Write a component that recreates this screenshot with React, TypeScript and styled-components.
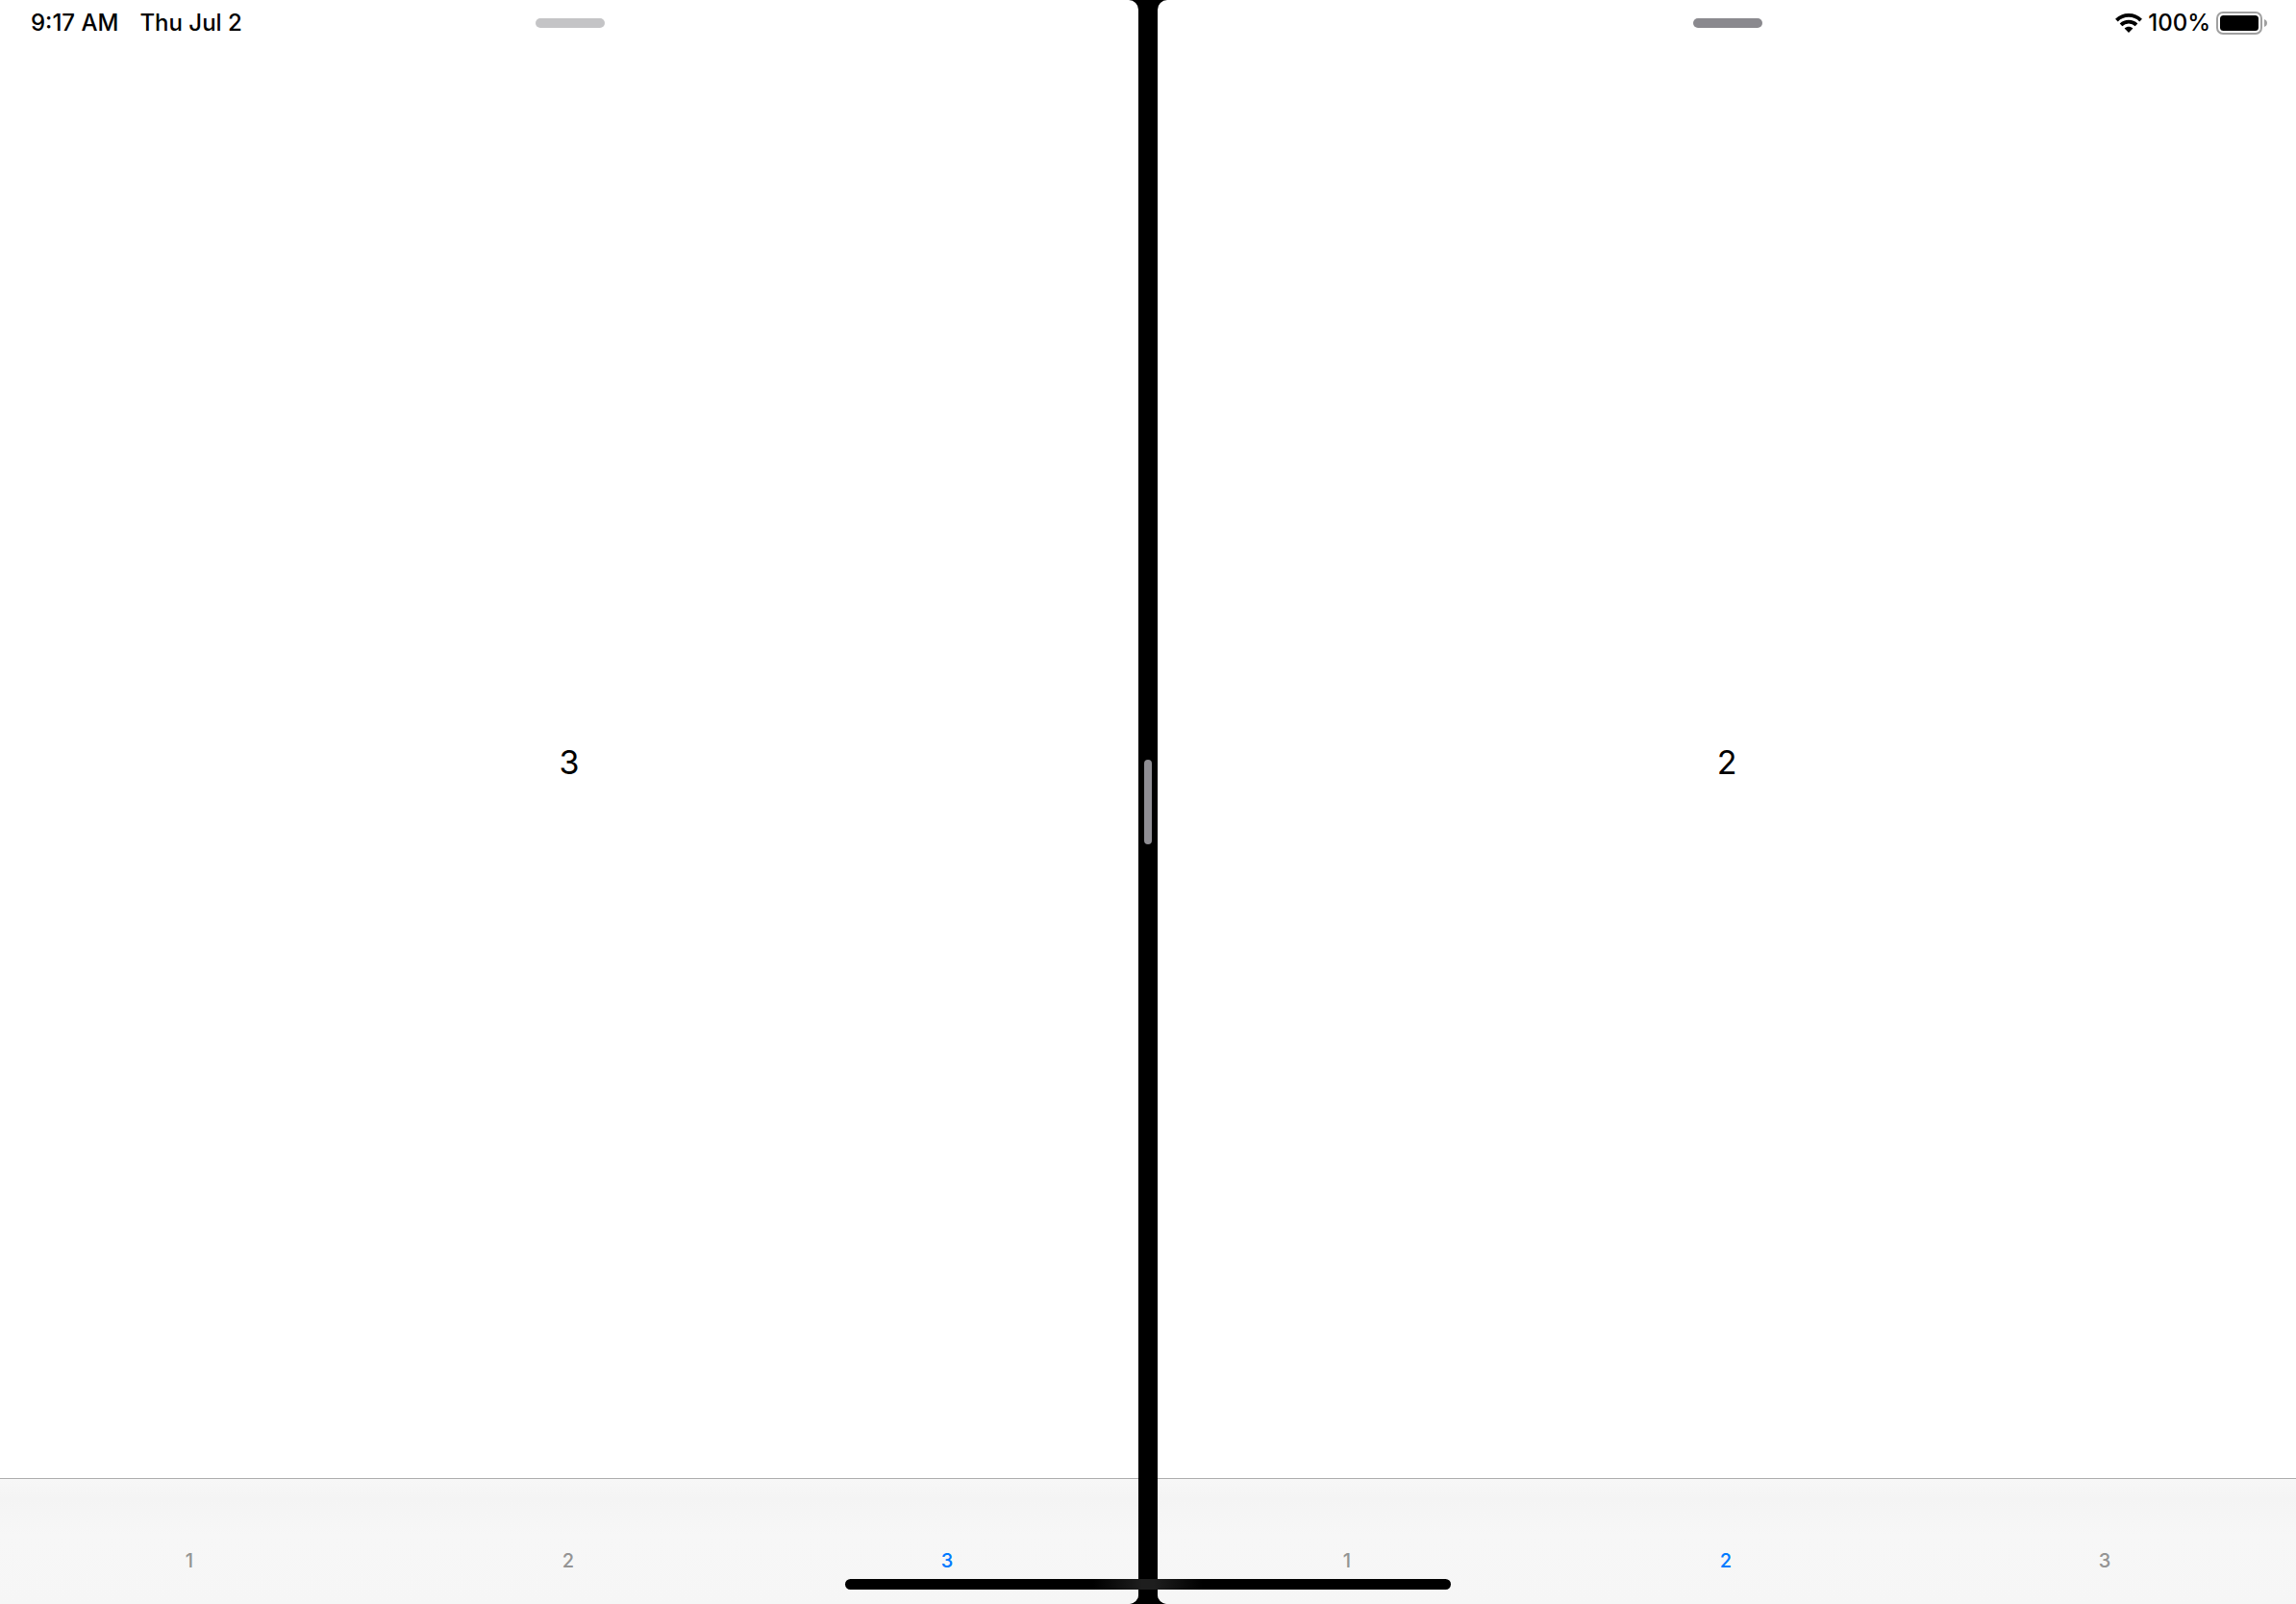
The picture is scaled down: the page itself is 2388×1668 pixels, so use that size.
import { useState } from 'react';
import styled, { createGlobalStyle } from 'styled-components';

const GlobalStyle = createGlobalStyle`
  *, *::before, *::after { box-sizing: border-box; }
  body {
    margin: 0;
    background: #000;
    color: #000;
    font-family: Inter, "Liberation Sans", sans-serif;
  }
`;

const Screen = styled.div`
  position: relative;
  display: flex;
  height: 100vh;
  overflow: hidden;
  background: #000;
`;

const Pane = styled.section<{ $side: 'left' | 'right' }>`
  flex: 1 1 0;
  min-width: 0;
  display: flex;
  flex-direction: column;
  overflow: hidden;
  background: #fff;
  border-radius: ${({ $side }) => ($side === 'left' ? '0 10px 10px 0' : '10px 0 0 10px')};
`;

const StatusBar = styled.header`
  display: grid;
  grid-template-columns: 1fr auto 1fr;
  align-items: center;
  height: 48px;
  padding: 0 30px 0 32px;
  font-size: 24px;
  line-height: 28px;
  font-weight: 500;
`;

const StatusStart = styled.div`
  display: flex;
  gap: 22px;
`;

const StatusEnd = styled.div`
  grid-column: 3;
  display: flex;
  align-items: center;
  justify-content: flex-end;
  gap: 6px;
`;

const Grabber = styled.button<{ $active: boolean }>`
  grid-column: 2;
  width: 72px;
  height: 10px;
  padding: 0;
  border: 0;
  border-radius: 5px;
  background: ${({ $active }) => ($active ? '#8a898e' : '#c4c4c6')};
`;

const Content = styled.main`
  flex: 1;
  display: flex;
  align-items: center;
  justify-content: center;
  font-size: 34px;
  line-height: 40px;
`;

const TabBar = styled.div`
  display: flex;
  height: 131px;
  padding-right: 2px;
  border-top: 1px solid #adadad;
  background: linear-gradient(#f7f7f7, #f4f4f4 16%, #f7f7f7 45%, #f6f6f6);
`;

const Tab = styled.button`
  flex: 1 1 0;
  display: flex;
  align-items: flex-end;
  justify-content: center;
  padding: 0 0 33px;
  border: 0;
  background: transparent;
  color: #949494;
  font: 500 20px/24px Inter, "Liberation Sans", sans-serif;

  &[aria-selected='true'] {
    color: #007aff;
  }
`;

const Divider = styled.div`
  flex: none;
  display: flex;
  align-items: center;
  justify-content: center;
  width: 20px;
`;

const DividerHandle = styled.span`
  width: 8px;
  height: 88px;
  border-radius: 4px;
  background: #8e8d93;
`;

const HomeIndicator = styled.div`
  position: absolute;
  left: 50%;
  bottom: 15px;
  width: 630px;
  height: 11px;
  transform: translateX(-50%);
  border-radius: 6px;
  background: linear-gradient(90deg, #000 41%, #1e1e1e 49%, #1e1e1e 51%, #000 59%);
  pointer-events: none;
`;

const WifiIcon = () => (
  <svg width="28" height="20" viewBox="0 0 28 20" role="img" aria-label="Wi-Fi">
    <g fill="none" stroke="#000" strokeWidth="3.8">
      <path d="M1.4 7.1C8.3 .2 19.7 .2 26.6 7.1" />
      <path d="M6 11.8c4.4-4.3 11.6-4.3 16 0" />
    </g>
    <path d="M14 20l-4.4-4.5c2.5-2.3 6.3-2.3 8.8 0z" />
  </svg>
);

const BatteryIcon = () => (
  <svg width="53" height="24" viewBox="0 0 53 24" role="img" aria-label="Battery full">
    <rect x="1" y="1" width="46" height="22" rx="6" fill="none" stroke="#a0a0a0" strokeWidth="2" />
    <rect x="4" y="4" width="40" height="16" rx="3.5" />
    <path d="M50 8c1.8.7 3 2.2 3 4s-1.2 3.300-3 4z" fill="#a0a0a0" />
  </svg>
);

const TABS = ['1', '2', '3'];

interface AppPaneProps {
  side: 'left' | 'right';
  initialTab: string;
}

const AppPane = ({ side, initialTab }: AppPaneProps) => {
  const [selected, setSelected] = useState(initialTab);

  return (
    <Pane $side={side}>
      <StatusBar>
        {side === 'left' && (
          <StatusStart>
            <time>9:17 AM</time>
            <time>Thu Jul 2</time>
          </StatusStart>
        )}
        <Grabber type="button" $active={side === 'right'} aria-label="Window options" />
        {side === 'right' && (
          <StatusEnd>
            <WifiIcon />
            <span>100%</span>
            <BatteryIcon />
          </StatusEnd>
        )}
      </StatusBar>
      <Content>{selected}</Content>
      <TabBar role="tablist">
        {TABS.map((tab) => (
          <Tab
            key={tab}
            type="button"
            role="tab"
            aria-selected={tab === selected}
            onClick={() => setSelected(tab)}
          >
            {tab}
          </Tab>
        ))}
      </TabBar>
    </Pane>
  );
};

export default function App() {
  return (
    <>
      <GlobalStyle />
      <Screen>
        <AppPane side="left" initialTab="3" />
        <Divider role="separator" aria-orientation="vertical">
          <DividerHandle />
        </Divider>
        <AppPane side="right" initialTab="2" />
        <HomeIndicator />
      </Screen>
    </>
  );
}
